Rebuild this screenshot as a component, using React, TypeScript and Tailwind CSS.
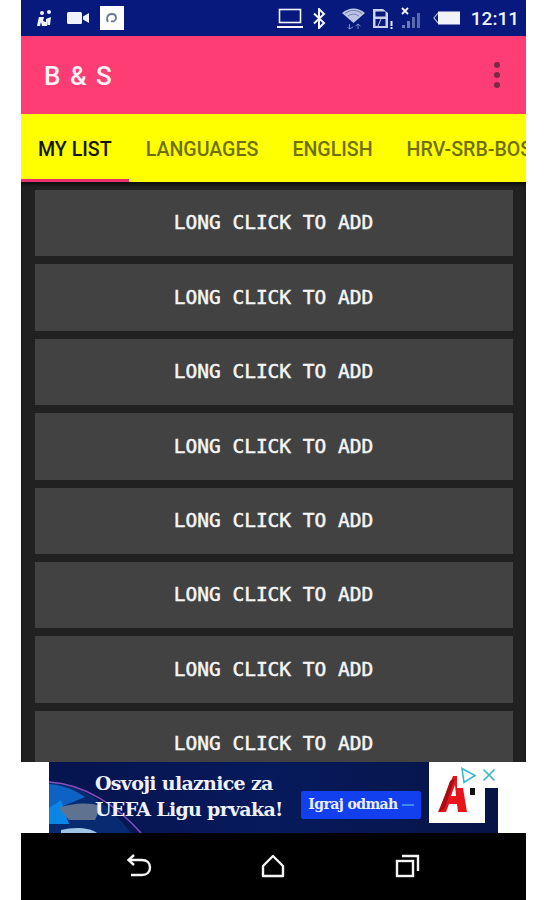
import React from 'react';

const TABS = ['MY LIST', 'LANGUAGES', 'ENGLISH', 'HRV-SRB-BOS'];
const ROWS = [0, 1, 2, 3, 4, 5, 6, 7];

function StatusBar() {
  return (
    <div className="h-[36px] bg-[#07197d] flex items-center text-white shrink-0">
      {/* left notification icons */}
      <svg className="ml-[15px] w-[17px] h-[18px]" viewBox="0 0 17 18" fill="#f1f3fb">
        <circle cx="6" cy="4" r="2" />
        <path d="M3 8h5l-1 4 3 1v-3l5-2-1 8h-2.500l.5-5-1 6H6l-1-4-1 4H1l1-5z" />
        <circle cx="13" cy="3" r="2" />
      </svg>
      <svg className="ml-[14px] w-[23px] h-[14px]" viewBox="0 0 23 14" fill="#f1f3fb">
        <rect x="0" y="1" width="15" height="12" rx="1.500" />
        <path d="M16 5.500l6-3.500v10l-6-3.500z" />
      </svg>
      <div className="ml-[10px] w-[24px] h-[24px] bg-white flex items-center justify-center">
        <svg className="w-[14px] h-[14px]" viewBox="0 0 14 14" fill="none">
          <path d="M3 11c-2-3-1-8 4-8 3 0 4 2 4 4 0 3-3 4-5 3" stroke="#6b7699" strokeWidth="1.800" />
        </svg>
      </div>

      <div className="ml-auto flex items-center">
        {/* laptop */}
        <svg className="w-[26px] h-[22px]" viewBox="0 0 26 22" fill="none" stroke="#f4f5fb">
          <rect x="2.500" y="2.500" width="21" height="13" strokeWidth="1.600" />
          <path d="M0 20h26" strokeWidth="2" />
        </svg>
        {/* bluetooth */}
        <svg className="ml-[10px] w-[13px] h-[21px]" viewBox="0 0 13 21" fill="none" stroke="#f4f5fb" strokeWidth="2">
          <path d="M1 5.500l10 9.500-5 5V1l5 5-10 9.500" />
        </svg>
        {/* wifi */}
        <svg className="ml-[15px] w-[25px] h-[24px]" viewBox="0 0 25 24" fill="none">
          <path d="M1 7c7-6 16-6 23 0l-11.500 10z" fill="#bcc5e2" />
          <path d="M4 7.500c5-4 12-4 17 0M7 10c3.500-2.500 7.500-2.500 11 0" stroke="#6b79b8" strokeWidth="1" />
          <path d="M8.500 18v5M12 21l-3.500 2-2-2M17 18v5M14.500 20l2.500-2 2.500 2" stroke="#7d8bc4" strokeWidth="1" />
        </svg>
        {/* sim card */}
        <svg className="ml-[6px] w-[21px] h-[23px]" viewBox="0 0 21 23" fill="none">
          <path d="M1 2h10l5 4v15H1z" fill="#c9d0e8" />
          <rect x="3.500" y="4.500" width="10" height="5" fill="#07197d" />
          <rect x="3.500" y="12" width="10" height="7" fill="#07197d" />
          <path d="M6 19l3-7" stroke="#c9d0e8" strokeWidth="1" />
          <rect x="18.500" y="14" width="2" height="5" fill="#e8ebf6" />
          <rect x="18.500" y="20" width="2" height="2" fill="#e8ebf6" />
        </svg>
        {/* signal */}
        <svg className="ml-[8px] w-[23px] h-[24px]" viewBox="0 0 23 24" fill="none">
          <path d="M1 2l6 6M7 2L1 8" stroke="#f4f5fb" strokeWidth="1.800" />
          <rect x="1" y="19" width="3" height="3" fill="#6c7ab5" />
          <rect x="6" y="15" width="3" height="7" fill="#6c7ab5" />
          <rect x="11" y="11" width="3" height="11" fill="#5a69aa" />
          <rect x="16" y="7" width="3" height="15" fill="#5a69aa" />
        </svg>
        {/* battery */}
        <svg className="ml-[9px] w-[28px] h-[16px]" viewBox="0 0 28 16" fill="none">
          <path d="M5 3L1 8l4 5" stroke="#b9c1df" strokeWidth="1.200" />
          <rect x="5" y="1.500" width="22" height="13" fill="#f1f3fb" />
        </svg>
        <span className="ml-[10px] mr-[7px] text-[19px] font-medium leading-none text-[#f1f3fb]">
          12:11
        </span>
      </div>
    </div>
  );
}

function AdBanner() {
  return (
    <div className="h-[71px] bg-white flex justify-center shrink-0">
      <div className="relative w-[449px] bg-[linear-gradient(90deg,#06144f,#061a5c_50%,#071446)] overflow-hidden flex items-center">
        {/* stadium art */}
        <svg className="absolute left-0 top-0 w-[105px] h-[71px]" viewBox="0 0 105 71" fill="none">
          <path d="M0 20c30 2 58 20 82 51H0z" fill="#082a70" />
          <path d="M0 22c14 1 26 6 36 13L0 50z" fill="#0d62c4" />
          <path d="M0 46l12-8 8 24H0z" fill="#0b86e6" />
          <path d="M0 20c36 2 68 24 92 51" stroke="#a55bd8" strokeWidth="1.500" opacity="0.8" />
          <path d="M10 46c12-5 30-6 42-2l-6 14H20z" fill="#5f7390" />
          <path d="M12 68c12-3 28-3 36 3H12z" fill="#9fc4e6" />
        </svg>
        <div className="relative ml-[46px] w-[206px] pb-[3px] font-['DejaVu_Serif',serif] font-bold text-[#eef1fb] text-[19px] leading-[26px] whitespace-nowrap tracking-[-0.7px]">
          <div>Osvoji ulaznice za</div>
          <div>UEFA Ligu prvaka!</div>
        </div>
        <div className="relative mt-[14px] w-[120px] h-[28px] bg-[#1240ee] rounded-[2px] flex items-center justify-center gap-[4px]">
          <span className="font-['DejaVu_Serif',serif] font-bold text-[14px] text-[#e9edfb] tracking-[-0.6px]">Igraj odmah</span>
          <span className="w-[12px] h-[2px] bg-[#3d8ae8]" />
        </div>
        {/* logo tile */}
        <div className="absolute right-[13px] top-0 w-[56px] h-[61px] bg-white">
          <svg className="w-full h-full" viewBox="0 0 56 61">
            <path d="M9 50L24 14h8l6 36h-9l-1-8h-8l-3 8z" fill="#e8141c" />
            <path d="M22 34h5l-1-11z" fill="#fff" />
            <path d="M16 46l10-30-5 3-11 31z" fill="#a90d13" />
            <rect x="41" y="24" width="5" height="9" fill="#111" />
          </svg>
        </div>
        {/* adchoices */}
        <div className="absolute right-0 top-0 w-[41px] h-[26px] bg-white flex items-center justify-center gap-[5px]">
          <svg className="w-[17px] h-[17px]" viewBox="0 0 17 17" fill="none" stroke="#3bb4d6" strokeWidth="1.600">
            <path d="M2 1.500l13 7-11 7z" />
          </svg>
          <svg className="w-[14px] h-[14px]" viewBox="0 0 14 14" fill="none" stroke="#3bb4d6" strokeWidth="1.700">
            <path d="M1.500 1.500l11 11M12.500 1.500l-11 11" />
          </svg>
        </div>
      </div>
    </div>
  );
}

function NavBar() {
  return (
    <div className="h-[67px] bg-black flex items-center shrink-0 pb-[1px]">
      <svg className="ml-[105px] w-[27px] h-[24px]" viewBox="0 0 27 24" fill="none" stroke="#f5f5f5" strokeWidth="2.400">
        <path d="M3 6h13c5 0 8 3 8 7.500S21 21 16 21H5" />
        <path d="M8 1L2.500 6 8 11" fill="none" />
      </svg>
      <svg className="ml-[108px] w-[24px] h-[24px]" viewBox="0 0 24 24" fill="none" stroke="#f5f5f5" strokeWidth="2.400" strokeLinejoin="round">
        <path d="M12 2L2 12v10h20V12z" />
      </svg>
      <svg className="ml-[110px] w-[25px] h-[24px]" viewBox="0 0 25 24" fill="none" stroke="#f5f5f5" strokeWidth="2.400">
        <rect x="2" y="7" width="16" height="15" />
        <path d="M7 2h16v15" />
      </svg>
    </div>
  );
}

export default function App() {
  return (
    <div className="h-[900px] bg-white flex justify-start pl-[21px] overflow-hidden font-['Roboto',sans-serif]">
      <div className="w-[505px] h-full flex flex-col">
        <StatusBar />

        {/* app bar */}
        <div className="h-[78px] bg-[#ff3d75] flex items-center justify-between pl-[23px] pr-[26px] shrink-0">
          <h1 className="text-[26px] font-medium text-[#fdf3f6] tracking-[1.5px] leading-none pt-[2px]">B &amp; S</h1>
          <div className="flex flex-col gap-[4px]">
            <span className="w-[6px] h-[6px] rounded-full bg-[#7a2a44]" />
            <span className="w-[6px] h-[6px] rounded-full bg-[#7a2a44]" />
            <span className="w-[6px] h-[6px] rounded-full bg-[#7a2a44]" />
          </div>
        </div>

        {/* tabs */}
        <div className="h-[68px] bg-[#ffff00] flex overflow-hidden shrink-0">
          {TABS.map((tab, idx) => (
            <div
              key={tab}
              className={`shrink-0 px-[17px] flex items-center text-[19.600px] font-medium leading-none whitespace-nowrap ${
                idx === 0
                  ? 'text-[#151505] border-b-[3px] border-[#e6356d] pt-[7px]'
                  : 'text-[#6f6f08] pt-[4px]'
              }`}
            >
              {tab}
            </div>
          ))}
        </div>

        {/* list */}
        <div className="flex-1 min-h-0 bg-[#212121] shadow-[inset_0_3px_3px_rgba(0,0,0,0.5)] overflow-hidden px-[13.500px] pt-[8px] flex flex-col gap-[8px]">
          {ROWS.map(row => (
            <div
              key={row}
              className="h-[66.400px] shrink-0 bg-[#424242] flex items-center justify-center font-['DejaVu_Sans_Mono',monospace] text-[19.500px] font-normal [-webkit-text-stroke:0.5px_#f5f5f5] text-[#f5f5f5] leading-none"
            >
              LONG CLICK TO ADD
            </div>
          ))}
        </div>

        <AdBanner />
        <NavBar />
      </div>
    </div>
  );
}
